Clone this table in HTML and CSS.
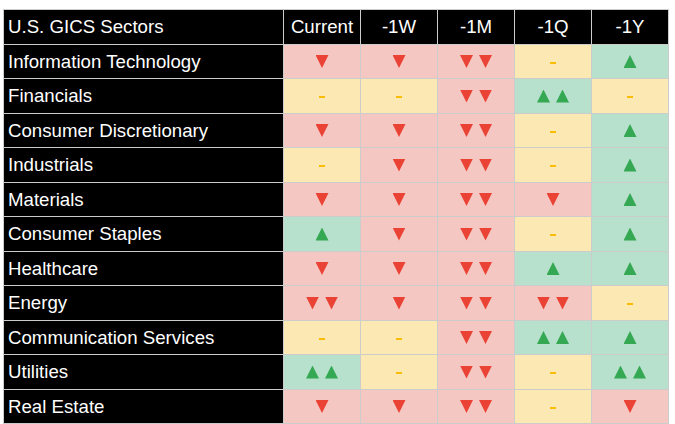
FILE: index.html
```html
<!DOCTYPE html>
<html>
<head>
<meta charset="utf-8">
<link rel="stylesheet" href="styles.css">
</head>
<body>
<div class="grid">
  <div class="cell head name">U.S. GICS Sectors</div>
  <div class="cell head">Current</div>
  <div class="cell head">-1W</div>
  <div class="cell head">-1M</div>
  <div class="cell head">-1Q</div>
  <div class="cell head">-1Y</div>

  <div class="cell name">Information Technology</div>
  <div class="cell neg"><span class="dn"></span></div>
  <div class="cell neg"><span class="dn"></span></div>
  <div class="cell neg"><span class="dn"></span><span class="dn"></span></div>
  <div class="cell flat"><span class="dash"></span></div>
  <div class="cell pos"><span class="up"></span></div>

  <div class="cell name">Financials</div>
  <div class="cell flat"><span class="dash"></span></div>
  <div class="cell flat"><span class="dash"></span></div>
  <div class="cell neg"><span class="dn"></span><span class="dn"></span></div>
  <div class="cell pos"><span class="up"></span><span class="up"></span></div>
  <div class="cell flat"><span class="dash"></span></div>

  <div class="cell name">Consumer Discretionary</div>
  <div class="cell neg"><span class="dn"></span></div>
  <div class="cell neg"><span class="dn"></span></div>
  <div class="cell neg"><span class="dn"></span><span class="dn"></span></div>
  <div class="cell flat"><span class="dash"></span></div>
  <div class="cell pos"><span class="up"></span></div>

  <div class="cell name">Industrials</div>
  <div class="cell flat"><span class="dash"></span></div>
  <div class="cell neg"><span class="dn"></span></div>
  <div class="cell neg"><span class="dn"></span><span class="dn"></span></div>
  <div class="cell flat"><span class="dash"></span></div>
  <div class="cell pos"><span class="up"></span></div>

  <div class="cell name">Materials</div>
  <div class="cell neg"><span class="dn"></span></div>
  <div class="cell neg"><span class="dn"></span></div>
  <div class="cell neg"><span class="dn"></span><span class="dn"></span></div>
  <div class="cell neg"><span class="dn"></span></div>
  <div class="cell pos"><span class="up"></span></div>

  <div class="cell name">Consumer Staples</div>
  <div class="cell pos"><span class="up"></span></div>
  <div class="cell neg"><span class="dn"></span></div>
  <div class="cell neg"><span class="dn"></span><span class="dn"></span></div>
  <div class="cell flat"><span class="dash"></span></div>
  <div class="cell pos"><span class="up"></span></div>

  <div class="cell name">Healthcare</div>
  <div class="cell neg"><span class="dn"></span></div>
  <div class="cell neg"><span class="dn"></span></div>
  <div class="cell neg"><span class="dn"></span><span class="dn"></span></div>
  <div class="cell pos"><span class="up"></span></div>
  <div class="cell pos"><span class="up"></span></div>

  <div class="cell name">Energy</div>
  <div class="cell neg"><span class="dn"></span><span class="dn"></span></div>
  <div class="cell neg"><span class="dn"></span></div>
  <div class="cell neg"><span class="dn"></span><span class="dn"></span></div>
  <div class="cell neg"><span class="dn"></span><span class="dn"></span></div>
  <div class="cell flat"><span class="dash"></span></div>

  <div class="cell name">Communication Services</div>
  <div class="cell flat"><span class="dash"></span></div>
  <div class="cell flat"><span class="dash"></span></div>
  <div class="cell neg"><span class="dn"></span><span class="dn"></span></div>
  <div class="cell pos"><span class="up"></span><span class="up"></span></div>
  <div class="cell pos"><span class="up"></span></div>

  <div class="cell name">Utilities</div>
  <div class="cell pos"><span class="up"></span><span class="up"></span></div>
  <div class="cell flat"><span class="dash"></span></div>
  <div class="cell neg"><span class="dn"></span><span class="dn"></span></div>
  <div class="cell flat"><span class="dash"></span></div>
  <div class="cell pos"><span class="up"></span><span class="up"></span></div>

  <div class="cell name">Real Estate</div>
  <div class="cell neg"><span class="dn"></span></div>
  <div class="cell neg"><span class="dn"></span></div>
  <div class="cell neg"><span class="dn"></span><span class="dn"></span></div>
  <div class="cell flat"><span class="dash"></span></div>
  <div class="cell neg"><span class="dn"></span></div>
</div>
</body>
</html>
```

FILE: styles.css
```css
html, body {
  margin: 0;
  padding: 0;
  background: #ffffff;
}

body {
  font-family: "Liberation Sans", Arial, sans-serif;
}

.grid {
  margin: 9px 0 0 3px;
  width: 664px;
  display: grid;
  grid-template-columns: 279px repeat(5, 76px);
  grid-template-rows: 34px 33px 34px 33px 34px 33px 34px 33px 34px 33px 34px 33px;
  gap: 1px;
  padding: 1px;
  background: #cccccc;
}

.cell {
  display: flex;
  align-items: center;
  justify-content: center;
  gap: 6px;
}

.head {
  background: #000000;
  color: #ffffff;
  font-size: 14pt;
}

.name {
  background: #000000;
  color: #ffffff;
  font-size: 14pt;
  justify-content: flex-start;
  padding-left: 4px;
}

.neg { background: #f4c7c3; }
.flat { background: #fce8b2; }
.pos { background: #b7e1cd; }

.dn, .up {
  display: block;
  width: 13px;
  height: 13px;
}

.dn {
  background: #ea4335;
  clip-path: polygon(0 0, 100% 0, 50% 100%);
}

.up {
  background: #34a853;
  clip-path: polygon(50% 0, 100% 100%, 0 100%);
}

.dash {
  display: block;
  width: 6px;
  height: 2px;
  margin-top: 2px;
  background: #fbbc04;
}
```
